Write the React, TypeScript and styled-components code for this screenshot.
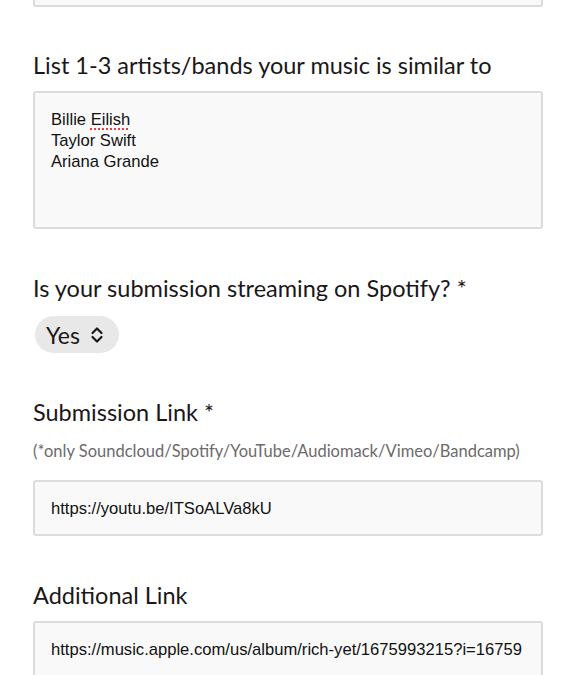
import React from "react";
import styled, { createGlobalStyle } from "styled-components";

const Global = createGlobalStyle`
  html, body { margin: 0; padding: 0; background: #ffffff; }
  body { overflow: hidden; }
`;

const Page = styled.div`
  width: 576px;
  padding: 0 33px;
  box-sizing: border-box;
  display: flex;
  flex-direction: column;
  margin-top: -50px;
`;

const Field = styled.div<{ $gap?: number; $mt?: number }>`
  display: flex;
  flex-direction: column;
  gap: ${(p) => p.$gap ?? 13}px;
  margin-top: ${(p) => p.$mt ?? 0}px;
`;

const Label = styled.div`
  font-family: Lato, "Open Sans", sans-serif;
  font-size: 23.5px;
  line-height: 26px;
  color: #1b1718;
`;

const Note = styled.div`
  font-family: Lato, "Open Sans", sans-serif;
  font-size: 16.5px;
  line-height: 18px;
  color: #6c6a6b;
  margin: 17px 0 20px;
`;

const Box = styled.div<{ $h: number }>`
  box-sizing: border-box;
  width: 510px;
  height: ${(p) => p.$h}px;
  background: #f9f9f9;
  border: 2px solid #dcdcdc;
  border-radius: 3px;
  font-family: "Liberation Sans", Arial, sans-serif;
  font-size: 16.6px;
  line-height: 21px;
  color: #111;
`;

const TextArea = styled(Box)`
  padding: 16px 16px;
  white-space: pre-line;
`;

const Input = styled(Box)`
  display: flex;
  align-items: center;
  padding: 0 16px;
  white-space: nowrap;
  overflow: hidden;
`;

const Misspelled = styled.span`
  text-decoration: underline dotted #ef3b3b;
  text-decoration-thickness: 2px;
  text-underline-offset: 3px;
`;

const Select = styled.div`
  align-self: flex-start;
  margin-left: 2px;
  height: 37px;
  box-sizing: border-box;
  padding: 0 15px 0 11px;
  border-radius: 19px;
  background: #e8e8e8;
  display: flex;
  align-items: center;
  gap: 10px;
  font-family: Lato, "Open Sans", sans-serif;
  font-size: 23px;
  color: #1b1718;
`;

const UpDown = () => (
  <svg width="14" height="18" viewBox="0 0 14 18" fill="none">
    <path d="M2.5 7 L7 2.5 L11.5 7" stroke="#1b1718" strokeWidth="2.2" strokeLinecap="round" strokeLinejoin="round" />
    <path d="M2.5 11 L7 15.5 L11.5 11" stroke="#1b1718" strokeWidth="2.2" strokeLinecap="round" strokeLinejoin="round" />
  </svg>
);

export default function App() {
  return (
    <>
      <Global />
      <Page>
        <Input $h={57} />
        <Field $mt={45} $gap={13}>
          <Label>List 1-3 artists/bands your music is similar to</Label>
          <TextArea $h={138}>
            Billie <Misspelled>Eilish</Misspelled>
            {"\n"}Taylor Swift{"\n"}Ariana Grande
          </TextArea>
        </Field>
        <Field $mt={46} $gap={15}>
          <Label>Is your submission streaming on Spotify? *</Label>
          <Select>
            Yes
            <UpDown />
          </Select>
        </Field>
        <Field $mt={46} $gap={0}>
          <Label>Submission Link *</Label>
          <Note>(*only Soundcloud/Spotify/YouTube/Audiomack/Vimeo/Bandcamp)</Note>
          <Input $h={56}>https://youtu.be/ITSoALVa8kU</Input>
        </Field>
        <Field $mt={46} $gap={13}>
          <Label>Additional Link</Label>
          <Input $h={56}>https://music.apple.com/us/album/rich-yet/1675993215?i=16759</Input>
        </Field>
      </Page>
    </>
  );
}
